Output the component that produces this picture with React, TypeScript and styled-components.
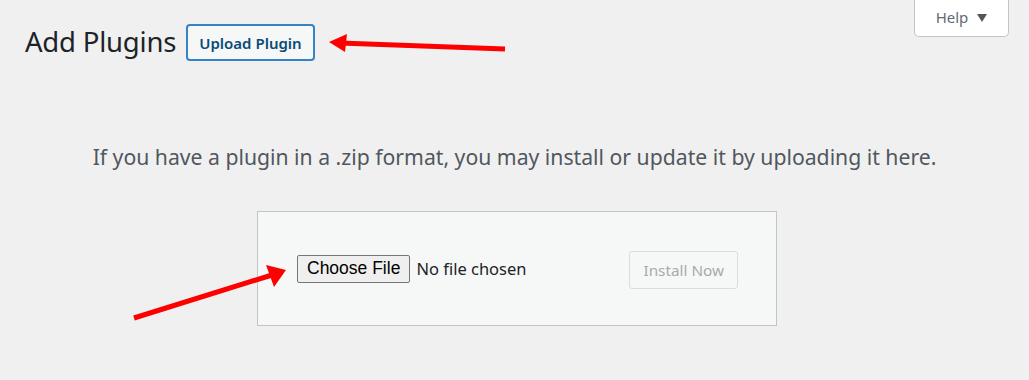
import React from "react";
import styled, { createGlobalStyle } from "styled-components";

const GlobalStyle = createGlobalStyle`
  html, body {
    margin: 0;
    padding: 0;
    background: #f0f0f1;
  }
  body {
    font-family: "Noto Sans", "Open Sans", sans-serif;
    color: #1d2327;
  }
`;

const Page = styled.div`
  position: relative;
  width: 1029px;
  height: 380px;
  overflow: hidden;
`;

const HelpBar = styled.div`
  display: flex;
  justify-content: flex-end;
  padding-right: 20px;
`;

const HelpTab = styled.button`
  display: flex;
  align-items: center;
  gap: 9px;
  width: 95px;
  height: 37px;
  justify-content: center;
  background: #fff;
  border: 1px solid #c3c4c7;
  border-top: none;
  border-radius: 0 0 5px 5px;
  color: #646970;
  font-family: inherit;
  font-size: 15px;
  padding: 0 0 2px;
`;

const Caret = styled.span`
  width: 0;
  height: 0;
  border-left: 5px solid transparent;
  border-right: 5px solid transparent;
  border-top: 8px solid #50575e;
  margin-top: 1px;
`;

const Header = styled.div`
  display: flex;
  align-items: center;
  gap: 10px;
  margin-top: -15px;
  padding-left: 25px;
`;

const Title = styled.h1`
  margin: 0;
  font-size: 27.5px;
  font-weight: 400;
  color: #1d2327;
  letter-spacing: -0.2px;
`;

const UploadButton = styled.button`
  height: 37px;
  padding: 0 11px;
  background: #f6f7f7;
  border: 2px solid #3582c4;
  border-radius: 4px;
  color: #0a4b78;
  font-family: inherit;
  font-size: 15px;
  font-weight: 600;
  margin-top: 2px;
`;

const Intro = styled.p`
  margin: 81px 0 0;
  text-align: center;
  font-size: 21.2px;
  color: #50575e;
`;

const UploadBox = styled.form`
  box-sizing: border-box;
  width: 520px;
  height: 115px;
  margin: 40px 0 0 257px;
  background: #f6f7f7;
  border: 1px solid #c3c4c7;
  display: flex;
  align-items: center;
  justify-content: space-between;
  padding: 0 38px 0 39px;
`;

const FilePicker = styled.div`
  display: flex;
  align-items: center;
  gap: 6px;
`;

const ChooseButton = styled.span`
  display: inline-flex;
  align-items: center;
  height: 28px;
  box-sizing: border-box;
  padding: 0 9px;
  background: #efefef;
  border: 1px solid #767676;
  border-radius: 2px;
  font-family: "Liberation Sans", Arial, sans-serif;
  font-size: 17.5px;
  color: #000;
`;

const NoFile = styled.span`
  font-size: 16.5px;
  color: #1d2327;
`;

const InstallButton = styled.button`
  height: 38px;
  padding: 0 13px;
  background: #f6f7f7;
  border: 1px solid #dcdcde;
  border-radius: 3px;
  color: #a7aaad;
  font-family: inherit;
  font-size: 15.3px;
  margin-top: 2px;
`;

const Arrow = styled.svg`
  position: absolute;
  left: 0;
  top: 0;
  pointer-events: none;
`;

export default function App() {
  return (
    <Page>
      <GlobalStyle />
      <HelpBar>
        <HelpTab type="button">
          Help <Caret />
        </HelpTab>
      </HelpBar>
      <Header>
        <Title>Add Plugins</Title>
        <UploadButton type="button">Upload Plugin</UploadButton>
      </Header>
      <Intro>
        If you have a plugin in a .zip format, you may install or update it by
        uploading it here.
      </Intro>
      <UploadBox onSubmit={(e) => e.preventDefault()}>
        <FilePicker>
          <ChooseButton>Choose File</ChooseButton>
          <NoFile>No file chosen</NoFile>
        </FilePicker>
        <InstallButton type="submit" disabled>
          Install Now
        </InstallButton>
      </UploadBox>
      <Arrow width="1029" height="380" viewBox="0 0 1029 380">
        <line x1="505" y1="49" x2="340" y2="43" stroke="#f00" strokeWidth="5" />
        <polygon points="329,42 347,34 345,52" fill="#f00" />
        <line x1="134" y1="318" x2="272" y2="275" stroke="#f00" strokeWidth="5" />
        <polygon points="286,270 266,265 274,287" fill="#f00" />
      </Arrow>
    </Page>
  );
}
